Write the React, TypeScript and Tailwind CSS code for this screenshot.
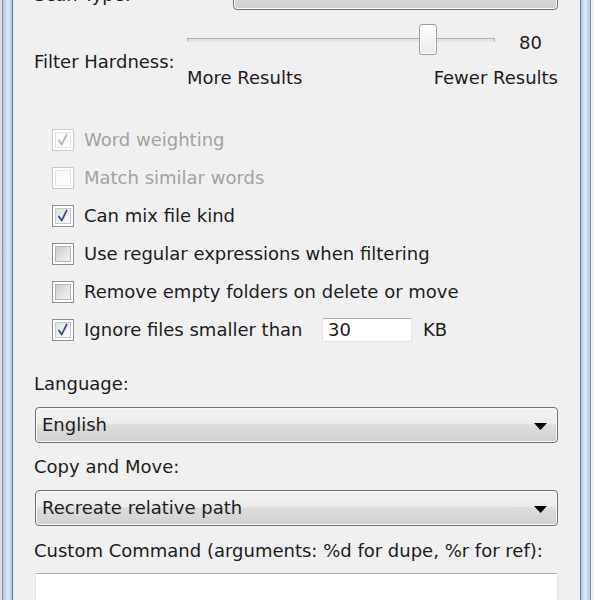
import clsx from 'clsx'

const font = "font-['DejaVu_Sans',sans-serif]"

function Checkbox({ checked, disabled }: { checked?: boolean; disabled?: boolean }) {
  return (
    <span
      className={clsx(
        'relative flex h-[22px] w-[22px] shrink-0 items-center justify-center border bg-white p-[2px]',
        disabled ? 'border-[#c9c9c9]' : 'border-[#8e8f8f]',
      )}
    >
      <span
        className={clsx(
          'h-full w-full border',
          disabled
            ? 'border-[#e3e3e3] bg-[#fbfbfb]'
            : checked
              ? 'border-[#c4c7cc] bg-[linear-gradient(135deg,#dfe1e4,#fafafa)]'
              : 'border-[#b1b5ba] bg-[linear-gradient(135deg,#c9ccd0,#f4f4f4)]',
        )}
      />
      {checked && (
        <svg viewBox="0 0 22 22" className="absolute inset-0 h-full w-full">
          <path
            d="M6.5 11.5 L9.5 16 L15 5"
            fill="none"
            stroke={disabled ? '#b4b4b4' : '#3b4c8c'}
            strokeWidth="2"
            strokeLinecap="round"
            strokeLinejoin="round"
          />
        </svg>
      )}
    </span>
  )
}

function Row({
  label,
  checked,
  disabled,
  children,
}: {
  label: string
  checked?: boolean
  disabled?: boolean
  children?: React.ReactNode
}) {
  return (
    <div className="flex h-[38px] shrink-0 items-center pl-[18px]">
      <Checkbox checked={checked} disabled={disabled} />
      <span className={clsx('ml-[10px] whitespace-nowrap', disabled ? 'text-[#a2a2a2]' : 'text-[#1c1c1c]', children && 'w-[238px]')}>
        {label}
      </span>
      {children}
    </div>
  )
}

function Dropdown({ value, className }: { value: string; className?: string }) {
  return (
    <div
      className={clsx(
        'relative flex h-[36px] shrink-0 items-center rounded-[4px] border border-[#707070] pl-[6px] shadow-[inset_0_0_0_1px_#fbfbfb]',
        'bg-[linear-gradient(to_bottom,#f3f3f3_0%,#ececec_45%,#dddddd_50%,#d0d0d0_100%)]',
        className,
      )}
    >
      <span className="text-[#1c1c1c]">{value}</span>
      <svg viewBox="0 0 13 7" className="absolute right-[10px] top-[15px] h-[7px] w-[13px]">
        <path d="M0 0 H13 L6.5 7 Z" fill="#000" />
      </svg>
    </div>
  )
}

export default function App() {
  return (
    <div className={clsx('flex h-[600px] w-[594px] overflow-hidden bg-[#f0f0f0] text-[18px] leading-[22px]', font)}>
      {/* window frame, left */}
      <div className="w-[14px] shrink-0 bg-[linear-gradient(to_right,#d9dfe7_0px,#d9dfe7_2px,#8391a2_2px,#8391a2_3px,#b3c7e3_3px,#dfeafa_8px,#aec3e0_12px,#6e7e92_12px,#6e7e92_13px,#e9e9e9_13px)]" />

      <div className="-mt-[26px] flex min-w-0 flex-1 flex-col pl-[20px] pr-[22px]">
        <div className="flex shrink-0 items-end">
          <span className="w-[199px] pb-[4px] text-[#1c1c1c]">Scan Type:</span>
          <Dropdown value="Contents" className="flex-1" />
        </div>

        <div className="mt-[14px] flex shrink-0">
          <span className="w-[153px] pt-[27px] text-[#1c1c1c]">Filter Hardness:</span>
          <div className="flex flex-1 flex-col">
            <div className="flex h-[32px] items-center">
              <div className="relative h-[32px] w-[308px]">
                <div className="absolute left-0 right-0 top-[14px] h-[4px] rounded-[1px] border border-[#b0b0b0] border-b-[#e6e6e6] bg-[#e4e4e4]" />
                <div className="absolute left-[232px] top-0 h-[31px] w-[18px] rounded-[3px] border border-[#9c9c9c] bg-[linear-gradient(to_bottom,#fcfcfc,#ececec)] shadow-[inset_0_0_0_1px_#ffffff]" />
              </div>
              <span className="ml-auto mr-[16px] pt-[6px] text-[#1c1c1c]">80</span>
            </div>
            <div className="mt-[11px] flex justify-between text-[#1c1c1c]">
              <span>More Results</span>
              <span>Fewer Results</span>
            </div>
          </div>
        </div>

        <div className="mt-[32px] flex shrink-0 flex-col">
          <Row label="Word weighting" checked disabled />
          <Row label="Match similar words" disabled />
          <Row label="Can mix file kind" checked />
          <Row label="Use regular expressions when filtering" />
          <Row label="Remove empty folders on delete or move" />
          <Row label="Ignore files smaller than" checked>
            <div className="flex h-[24px] w-[90px] items-center rounded-[2px] border border-[#e2e3ea] border-t-[#abadb3] bg-white pl-[5px] text-[#1c1c1c]">
              30
            </div>
            <span className="ml-[11px] text-[#1c1c1c]">KB</span>
          </Row>
        </div>

        <span className="mt-[24px] shrink-0 text-[#1c1c1c]">Language:</span>
        <Dropdown value="English" className="ml-px mt-[12px]" />
        <span className="mt-[13px] shrink-0 text-[#1c1c1c]">Copy and Move:</span>
        <Dropdown value="Recreate relative path" className="ml-px mt-[12px]" />
        <span className="mt-[14px] shrink-0 text-[#1c1c1c]">Custom Command (arguments: %d for dupe, %r for ref):</span>
        <div className="ml-px mt-[11px] h-[40px] shrink-0 rounded-[2px] border border-[#e2e3ea] border-t-[#abadb3] bg-white" />
      </div>

      {/* window frame, right */}
      <div className="w-[14px] shrink-0 bg-[linear-gradient(to_right,#6e7e92_0px,#6e7e92_1px,#aec3e0_1px,#dfeafa_5px,#b3c7e3_10px,#8391a2_10px,#8391a2_11px,#eef1f5_11px)]" />
    </div>
  )
}
